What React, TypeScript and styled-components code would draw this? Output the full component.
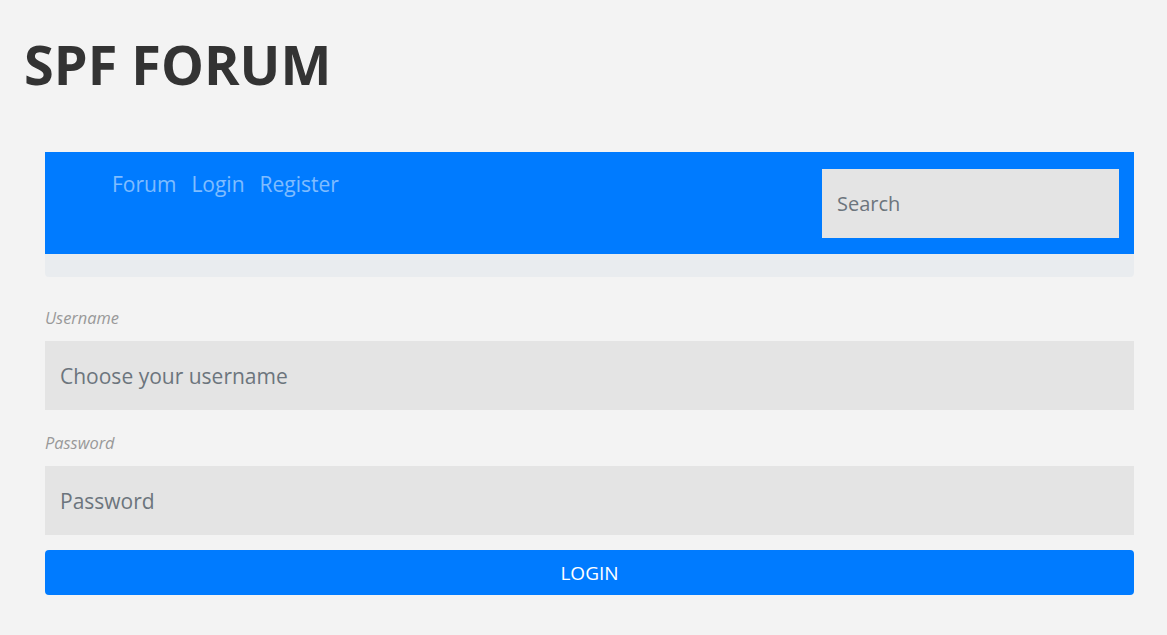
import styled, { createGlobalStyle } from 'styled-components';

const GlobalStyle = createGlobalStyle`
  body {
    margin: 0;
    background: #f3f3f3;
    font-family: 'Open Sans', 'Liberation Sans', sans-serif;
  }
`

const Page = styled.div`
  padding: 0 33px 40px 0;
`

const Title = styled.h1`
  margin: 0;
  padding: 28px 0 0 24px;
  font-size: 54px;
  line-height: 72px;
  font-weight: 700;
  color: #333333;
`

const Container = styled.div`
  margin: 52px 0 0 45px;
`

const NavWrap = styled.div`
  background: #e9ecef;
  border-radius: 0 0 4px 4px;
  padding-bottom: 23px;
`

const Navbar = styled.nav`
  display: flex;
  justify-content: space-between;
  align-items: flex-start;
  height: 102px;
  background: #007bff;
  padding: 0 15px 0 67px;
  box-sizing: border-box;
`

const NavLinks = styled.ul`
  display: flex;
  gap: 15px;
  list-style: none;
  margin: 0;
  padding: 18px 0 0;
`

const NavLink = styled.a`
  color: rgba(255, 255, 255, 0.5);
  font-size: 21px;
  line-height: 28px;
  text-decoration: none;
`

const SearchInput = styled.input`
  margin-top: 17px;
  width: 297px;
  height: 69px;
  box-sizing: border-box;
  border: none;
  background: #e4e4e4;
  padding: 0 15px;
  font-family: inherit;
  font-size: 20px;
  color: #495057;
  &::placeholder { color: #6c757d; }
`

const Form = styled.form`
  display: flex;
  flex-direction: column;
  padding-top: 30px;
`

const Label = styled.label`
  font-style: italic;
  font-size: 16.4px;
  line-height: 22px;
  color: #999999;
  margin-bottom: 12px;
`

const Field = styled.input<{ $last?: boolean }>`
  height: 69px;
  box-sizing: border-box;
  border: none;
  background: #e4e4e4;
  padding: 0 15px;
  font-family: inherit;
  font-size: 21px;
  color: #495057;
  margin-bottom: ${p => (p.$last ? '15px' : '22px')};
  &::placeholder { color: #6c757d; }
`

const Button = styled.button`
  height: 45px;
  border: none;
  border-radius: 4px;
  background: #007bff;
  color: #ffffff;
  font-family: inherit;
  font-size: 19px;
  text-transform: uppercase;
`

const App = () => {
  return (
    <Page>
      <GlobalStyle />
      <Title>SPF FORUM</Title>
      <Container>
        <NavWrap>
          <Navbar>
            <NavLinks>
              <li><NavLink href="#">Forum</NavLink></li>
              <li><NavLink href="#">Login</NavLink></li>
              <li><NavLink href="#">Register</NavLink></li>
            </NavLinks>
            <SearchInput placeholder="Search" />
          </Navbar>
        </NavWrap>
        <Form>
          <Label>Username</Label>
          <Field placeholder="Choose your username" />
          <Label>Password</Label>
          <Field type="password" placeholder="Password" $last />
          <Button type="button">Login</Button>
        </Form>
      </Container>
    </Page>
  );
};

export default App;
